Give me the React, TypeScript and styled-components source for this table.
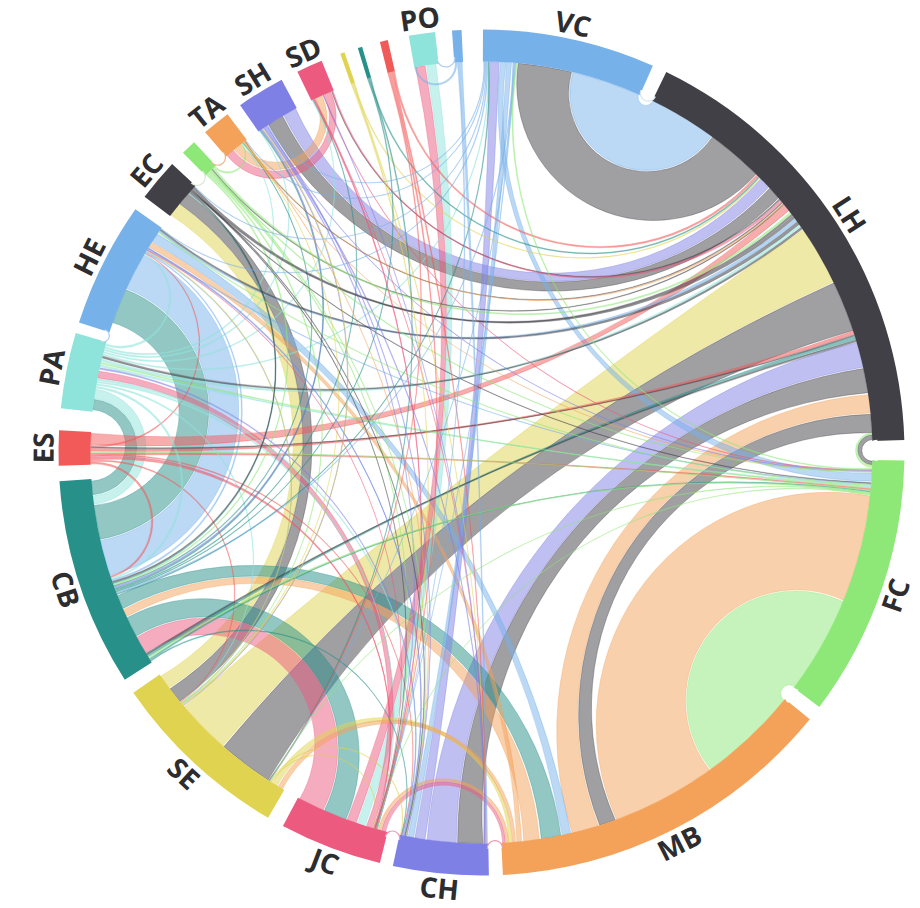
import * as React from 'react';
import styled, { createGlobalStyle } from 'styled-components';

type Range = [number, number];

type Group = {
  id: string;
  start: number;
  end: number;
  color: string;
  label?: boolean;
};

type Band = {
  a: Range;
  b: Range;
  color: string;
};

const palette = {
  blue: '#77b1e9',
  dark: '#414046',
  green: '#8ee878',
  orange: '#f4a259',
  purple: '#7f80e6',
  pink: '#ec5a80',
  yellow: '#e0d34f',
  teal: '#279089',
  red: '#f25a5a',
  aqua: '#8ee4da',
};

const size = {
  width: 920,
  height: 908,
  cx: 481.5,
  cy: 452.5,
  inner: 391,
  outer: 423,
  label: 438,
};

const groups: Group[] = [
  { id: 'VC', start: 0.2, end: 23.9, color: palette.blue, label: true },
  { id: 'LH', start: 25.9, end: 88.3, color: palette.dark, label: true },
  { id: 'FC', start: 91.1, end: 127, color: palette.green, label: true },
  { id: 'MB', start: 129.1, end: 177.1, color: palette.orange, label: true },
  { id: 'CH', start: 179, end: 192.1, color: palette.purple, label: true },
  { id: 'JC', start: 193.9, end: 208, color: palette.pink, label: true },
  { id: 'SE', start: 210.3, end: 235.4, color: palette.yellow, label: true },
  { id: 'CB', start: 237.5, end: 266.1, color: palette.teal, label: true },
  { id: 'ES', start: 268.2, end: 273, color: palette.red, label: true },
  { id: 'PA', start: 276, end: 286.4, color: palette.aqua, label: true },
  { id: 'HE', start: 287.9, end: 305.1, color: palette.blue, label: true },
  { id: 'EC', start: 307.2, end: 313, color: palette.dark, label: true },
  { id: 'g1', start: 315.1, end: 317.2, color: palette.green },
  { id: 'TA', start: 319.2, end: 323.1, color: palette.orange, label: true },
  { id: 'SH', start: 325.2, end: 331.8, color: palette.purple, label: true },
  { id: 'SD', start: 334.2, end: 337.8, color: palette.pink, label: true },
  { id: 'y1', start: 340.5, end: 341.1, color: palette.yellow },
  { id: 't1', start: 343, end: 343.6, color: palette.teal },
  { id: 'r1', start: 346.1, end: 347.2, color: palette.red },
  { id: 'PO', start: 350.1, end: 353.7, color: palette.aqua, label: true },
  { id: 'b1', start: 356, end: 357.3, color: palette.blue },
];

const byId: Record<string, Group> = Object.fromEntries(groups.map((g) => [g.id, g]));

// the wide links, placed by hand
const bands: Band[] = [
  { a: [13.5, 23.7], b: [26, 36], color: palette.blue },
  { a: [5.4, 13.3], b: [36.2, 44.6], color: palette.dark },
  { a: [329.6, 331.6], b: [45.6, 47.3], color: palette.purple },
  { a: [327, 329.4], b: [47.5, 49.4], color: palette.dark },
  { a: [221.4, 229.5], b: [55.3, 64.1], color: palette.yellow },
  { a: [213.1, 221.2], b: [64.3, 71.8], color: palette.dark },
  { a: [183.7, 188], b: [73.7, 77.4], color: palette.purple },
  { a: [179.8, 183.5], b: [77.6, 81.2], color: palette.dark },
  { a: [162.6, 166.6], b: [81.5, 84.2], color: palette.orange },
  { a: [160, 162.4], b: [84.4, 87.1], color: palette.dark },
  { a: [87.4, 88.1], b: [91.3, 91.8], color: palette.dark },
  { a: [91.85, 92.2], b: [87.15, 87.35], color: palette.green },
  { a: [96.4, 112.2], b: [144.3, 159.8], color: palette.orange },
  { a: [112.4, 126.8], b: [129.3, 144.1], color: palette.green },
  { a: [294.8, 300.3], b: [251.7, 257], color: palette.blue },
  { a: [257.2, 262.2], b: [289.4, 294.6], color: palette.teal },
  { a: [263.8, 265.8], b: [276.3, 277.8], color: palette.teal },
  { a: [277.9, 279.3], b: [262.4, 263.6], color: palette.aqua },
  { a: [233, 235.1], b: [307.4, 309.4], color: palette.yellow },
  { a: [309.5, 311.4], b: [230.5, 232.8], color: palette.dark },
  { a: [203.9, 207.7], b: [239.2, 241.8], color: palette.pink },
  { a: [242, 245], b: [200.3, 203.7], color: palette.teal },
  { a: [171.5, 173.8], b: [245.2, 246.3], color: palette.orange },
  { a: [246.5, 248.5], b: [168.3, 171.2], color: palette.teal },
  { a: [302.6, 304], b: [166.8, 168.1], color: palette.blue },
  { a: [174.1, 174.8], b: [301.7, 302.5], color: palette.orange },
  { a: [198.7, 200.1], b: [350.3, 351.7], color: palette.pink },
  { a: [351.9, 353.3], b: [197.3, 198.5], color: palette.aqua },
  { a: [196.2, 197.1], b: [281, 282], color: palette.pink },
  { a: [336.3, 337.3], b: [319.4, 320.6], color: palette.pink },
  { a: [320.8, 322], b: [334.9, 335.9], color: palette.orange },
  { a: [188.3, 189.8], b: [1.2, 2.6], color: palette.purple },
  { a: [2.8, 3.6], b: [93, 94.2], color: palette.blue },
  { a: [3.7, 4.4], b: [190, 190.8], color: palette.blue },
  { a: [271.2, 272.8], b: [50.8, 51.8], color: palette.red },
  { a: [194.2, 194.8], b: [176.5, 176.9], color: palette.pink },
  { a: [176, 176.4], b: [194.9, 195.3], color: palette.orange },
  { a: [211.5, 212.3], b: [175.6, 176], color: palette.yellow },
  { a: [175, 175.5], b: [210.6, 211.3], color: palette.orange },
];

// room left on each group for the thin links
const freeSlots: Record<string, Range[]> = {
  VC: [[0.3, 1.1], [4.5, 5.3]],
  LH: [[44.7, 45.5], [49.5, 50.7], [51.9, 55.2], [71.9, 73.6]],
  FC: [[92.3, 92.9], [94.3, 96.3]],
  CH: [[179.1, 179.7], [190.9, 192]],
  JC: [[195.4, 196.1]],
  SE: [[212.4, 213], [229.6, 230.4]],
  CB: [[237.7, 239.1], [248.6, 251.6]],
  ES: [[268.3, 271.1]],
  PA: [[279.4, 280.9], [282.1, 286.2]],
  HE: [[300.4, 301.6], [304.1, 305]],
  EC: [[311.5, 312.9]],
  g1: [[315.2, 317.1]],
  TA: [[322.1, 323]],
  SH: [[325.3, 326.9]],
  SD: [[334.3, 334.8], [336, 336.2], [337.4, 337.7]],
  y1: [[340.5, 341.1]],
  t1: [[343, 343.6]],
  r1: [[346.1, 347.2]],
  PO: [[350.15, 350.25], [353.4, 353.6]],
  b1: [[356.1, 357.2]],
};

const thinLinks: [string, string, number][] = [
  ['ES', 'LH', 0.5], ['ES', 'FC', 0.4], ['ES', 'CH', 0.2], ['ES', 'SE', 0.2], ['ES', 'JC', 0.3], ['ES', 'HE', 0.2], ['ES', 'CB', 0.3],
  ['PA', 'LH', 0.4], ['PA', 'FC', 0.3], ['PA', 'VC', 0.2], ['PA', 'CH', 0.3], ['PA', 'JC', 0.25], ['PA', 'SE', 0.2], ['PA', 'SH', 0.2],
  ['PA', 'SD', 0.2], ['PA', 'CB', 0.3], ['PA', 'TA', 0.2], ['PA', 'HE', 0.3],
  ['HE', 'LH', 0.5], ['HE', 'FC', 0.3], ['HE', 'CH', 0.2], ['HE', 'SE', 0.2], ['HE', 'CB', 0.3],
  ['CB', 'LH', 0.5], ['CB', 'FC', 0.3], ['CB', 'VC', 0.2], ['CB', 'SH', 0.3], ['CB', 'TA', 0.2], ['CB', 'SD', 0.2], ['CB', 'EC', 0.2], ['CB', 'CH', 0.2],
  ['LH', 'HE', 0.5], ['LH', 'PA', 0.3], ['LH', 'CB', 0.3], ['LH', 'EC', 0.3], ['LH', 'ES', 0.2], ['LH', 'TA', 0.15], ['LH', 'g1', 0.15], ['LH', 'SD', 0.2],
  ['SD', 'LH', 0.3], ['SD', 'FC', 0.2], ['SD', 'CH', 0.2], ['SD', 'JC', 0.2],
  ['TA', 'LH', 0.2], ['TA', 'CH', 0.2], ['TA', 'FC', 0.15],
  ['SH', 'CH', 0.4], ['SH', 'JC', 0.3], ['SH', 'SE', 0.2], ['SH', 'FC', 0.2], ['SH', 'CB', 0.2],
  ['g1', 'LH', 0.3], ['g1', 'JC', 0.2], ['g1', 'CH', 0.2], ['g1', 'SE', 0.2], ['g1', 'TA', 0.25], ['g1', 'CB', 0.2], ['g1', 'FC', 0.2],
  ['EC', 'LH', 0.4], ['EC', 'CH', 0.2], ['EC', 'FC', 0.2], ['EC', 'JC', 0.2], ['EC', 'CB', 0.2],
  ['y1', 'JC', 0.2], ['y1', 'LH', 0.15], ['y1', 'CH', 0.15],
  ['t1', 'SE', 0.2], ['t1', 'LH', 0.2], ['t1', 'CB', 0.15],
  ['r1', 'JC', 0.3], ['r1', 'CH', 0.3], ['r1', 'LH', 0.3], ['r1', 'SE', 0.2],
  ['b1', 'CH', 0.5], ['b1', 'PO', 0.3], ['b1', 'JC', 0.2],
  ['VC', 'SE', 0.2], ['VC', 'JC', 0.2], ['VC', 'HE', 0.2], ['VC', 'CB', 0.2], ['VC', 'TA', 0.15], ['VC', 'EC', 0.15], ['VC', 'SH', 0.15],
  ['FC', 'HE', 0.3], ['FC', 'CB', 0.3], ['FC', 'PA', 0.2], ['FC', 'ES', 0.2], ['FC', 'SE', 0.2], ['FC', 'JC', 0.2], ['FC', 'VC', 0.3],
  ['CH', 'HE', 0.3], ['CH', 'SH', 0.3], ['CH', 'PA', 0.2], ['CH', 'SD', 0.15],
  ['SE', 'TA', 0.15], ['SE', 'SH', 0.2], ['SE', 'HE', 0.2], ['SE', 'JC', 0.3], ['SE', 'CH', 0.3],
  ['JC', 'SD', 0.2], ['JC', 'ES', 0.2], ['JC', 'HE', 0.2],
];

// white notches where two neighbouring groups meet (group before, group after, edge colour)
const caps: [string, string, string][] = [
  ['VC', 'LH', '#d6e4f2'],
  ['LH', 'FC', 'none'],
  ['FC', 'MB', 'none'],
  ['MB', 'CH', '#e99ab2'],
  ['CH', 'JC', '#e99ab2'],
  ['PA', 'HE', '#a9cdf0'],
  ['EC', 'g1', '#d8e8d8'],
  ['g1', 'TA', '#e6b88a'],
  ['PO', 'b1', '#a9cdf0'],
];

const rad = (deg: number) => (deg * Math.PI) / 180;

const pt = (r: number, deg: number) => {
  const a = rad(deg);
  return `${(r * Math.sin(a)).toFixed(2)},${(-r * Math.cos(a)).toFixed(2)}`;
};

const arcFlag = (from: number, to: number) => ((((to - from) % 360) + 360) % 360 > 180 ? 1 : 0);

// curve that bends toward the centre, deeper the further apart the ends are
const bend = (r: number, from: number, to: number) => {
  const delta = ((((to - from) % 360) + 540) % 360) - 180;
  const s = Math.sin(rad(Math.abs(delta)) / 2);
  const c = Math.cos(rad(Math.abs(delta)) / 2);
  const mid = r * c;
  const half = r * s;
  const depth = mid / (1 + s + 0.25 * s * s);
  const sag = mid - depth;
  if (sag < 0.5 || half < 0.01) return `L${pt(r, to)}`;
  const rho = (half * half + sag * sag) / (2 * sag);
  return `A${rho.toFixed(2)},${rho.toFixed(2)} 0 ${sag > half ? 1 : 0} ${delta > 0 ? 0 : 1} ${pt(r, to)}`;
};

const ribbonPath = (r: number, a: Range, b: Range) =>
  `M${pt(r, a[0])} A${r},${r} 0 ${arcFlag(a[0], a[1])} 1 ${pt(r, a[1])} ${bend(r, a[1], b[0])} ` +
  `A${r},${r} 0 ${arcFlag(b[0], b[1])} 1 ${pt(r, b[1])} ${bend(r, b[1], a[0])} Z`;

const arcPath = (ri: number, ro: number, a0: number, a1: number) => {
  const large = arcFlag(a0, a1);
  return `M${pt(ro, a0)} A${ro},${ro} 0 ${large} 1 ${pt(ro, a1)} L${pt(ri, a1)} A${ri},${ri} 0 ${large} 0 ${pt(ri, a0)} Z`;
};

const midOf = (g: Group) => (g.start + g.end) / 2;

// spread the thin links over the free room of each group
const layoutThin = () => {
  const ends: Record<string, { link: number; side: 0 | 1; w: number; other: string }[]> = {};
  thinLinks.forEach(([from, to, w], i) => {
    (ends[from] = ends[from] || []).push({ link: i, side: 0, w, other: to });
    (ends[to] = ends[to] || []).push({ link: i, side: 1, w, other: from });
  });
  const placed: Range[][] = thinLinks.map(() => [
    [0, 0],
    [0, 0],
  ]);
  Object.entries(ends).forEach(([id, list]) => {
    const slots = freeSlots[id];
    const home = midOf(byId[id]);
    list.sort((p, q) => {
      const dp = (midOf(byId[p.other]) - home + 360) % 360;
      const dq = (midOf(byId[q.other]) - home + 360) % 360;
      return dq - dp;
    });
    const room = slots.reduce((sum, [s, e]) => sum + e - s, 0);
    const total = list.reduce((sum, e) => sum + e.w, 0);
    const scale = Math.min(1, (0.8 * room) / total);
    const gap = (room - total * scale) / list.length;
    let u = gap / 2;
    list.forEach((end) => {
      const width = end.w * scale;
      let walked = 0;
      let range: Range = [slots[0][0], slots[0][0] + width];
      for (const [s, e] of slots) {
        if (u < walked + (e - s)) {
          let a0 = s + (u - walked);
          if (a0 + width > e) a0 = Math.max(s, e - width);
          range = [a0, a0 + width];
          break;
        }
        walked += e - s;
        const last = slots[slots.length - 1];
        range = [last[1] - width, last[1]];
      }
      placed[end.link][end.side] = range;
      u += width + gap;
    });
  });
  return thinLinks.map(([from], i) => ({
    a: placed[i][0],
    b: placed[i][1],
    color: byId[from].color,
  }));
};

const capPaths = (from: string, to: string) => {
  const r = size.inner + 5;
  const a0 = byId[from].end - 0.15;
  const a1 = byId[to].start + 0.15;
  const curve = `M${pt(r, a0)} ${bend(r, a0, a1)}`;
  return {
    fill: `${curve} A${r},${r} 0 0 0 ${pt(r, a0)} Z`,
    edge: curve,
  };
};

const ChordChart: React.FC = () => {
  const thin = React.useMemo(layoutThin, []);

  return (
    <ChartSvg viewBox={`0 0 ${size.width} ${size.height}`}>
      <g transform={`translate(${size.cx},${size.cy})`}>
        {bands.map((band, i) => (
          <Ribbon key={`band-${i}`} d={ribbonPath(size.inner, band.a, band.b)} $color={band.color} />
        ))}
        {thin.map((link, i) => (
          <Ribbon key={`thin-${i}`} d={ribbonPath(size.inner, link.a, link.b)} $color={link.color} $thin />
        ))}
        {groups.map((g) => (
          <GroupArc key={g.id} d={arcPath(size.inner, size.outer, g.start, g.end)} $color={g.color} />
        ))}
        {caps.map(([from, to, edge]) => {
          const paths = capPaths(from, to);
          return (
            <g key={`${from}-${to}`}>
              <CapFill d={paths.fill} />
              <CapEdge d={paths.edge} $color={edge} />
            </g>
          );
        })}
        {groups
          .filter((g) => g.label)
          .map((g) => {
            const mid = midOf(g);
            const turn = mid > 90 && mid < 270 ? mid - 180 : mid;
            const a = rad(mid);
            const x = size.label * Math.sin(a);
            const y = -size.label * Math.cos(a);
            return (
              <GroupLabel key={`label-${g.id}`} transform={`translate(${x.toFixed(2)},${y.toFixed(2)}) rotate(${turn.toFixed(2)})`} dy="0.36em">
                {g.id}
              </GroupLabel>
            );
          })}
      </g>
    </ChartSvg>
  );
};

const App: React.FC = () => (
  <>
    <GlobalStyle />
    <Page>
      <ChordChart />
    </Page>
  </>
);

const GlobalStyle = createGlobalStyle`
  html, body {
    margin: 0;
    padding: 0;
    background: #ffffff;
  }
`;

const Page = styled.div`
  width: ${size.width}px;
  height: ${size.height}px;
  background: #ffffff;
  overflow: hidden;
`;

const ChartSvg = styled.svg`
  display: block;
  width: ${size.width}px;
  height: ${size.height}px;
`;

const Ribbon = styled.path<{ $color: string; $thin?: boolean }>`
  fill: ${({ $color }) => $color};
  fill-opacity: ${({ $thin }) => ($thin ? 0.55 : 0.5)};
  stroke: ${({ $color }) => $color};
  stroke-width: ${({ $thin }) => ($thin ? 0.5 : 0.8)};
  stroke-opacity: ${({ $thin }) => ($thin ? 0.5 : 0.45)};
`;

const GroupArc = styled.path<{ $color: string }>`
  fill: ${({ $color }) => $color};
  stroke: none;
`;

const CapFill = styled.path`
  fill: #ffffff;
  stroke: none;
`;

const CapEdge = styled.path<{ $color: string }>`
  fill: none;
  stroke: ${({ $color }) => $color};
  stroke-width: 1.2;
`;

const GroupLabel = styled.text`
  font-family: 'Open Sans', 'DejaVu Sans', sans-serif;
  font-size: 28px;
  font-weight: 700;
  fill: #2d2d2f;
  text-anchor: middle;
`;

export default App;
